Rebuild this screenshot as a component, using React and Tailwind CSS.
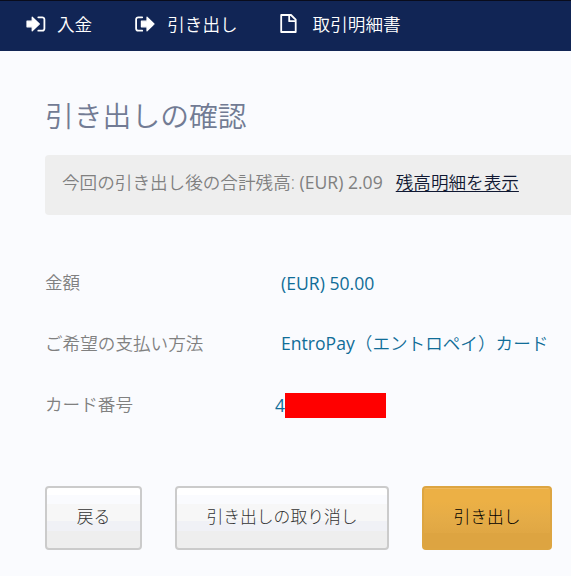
import React from 'react';

const DepositIcon = () => (
  <svg viewBox="0 0 20 16" className="w-5 h-4 shrink-0" fill="none">
    <path d="M1 5.2h5.2V1.2L13.3 8l-7.1 6.8v-4H1z" fill="#fff" stroke="#fff" strokeWidth="1.2" strokeLinejoin="round" />
    <path d="M12.3 1.3h3.9a2.2 2.2 0 0 1 2.2 2.2v9a2.2 2.2 0 0 1-2.2 2.2h-3.9" stroke="#fff" strokeWidth="1.8" strokeLinecap="round" />
  </svg>
);

const WithdrawIcon = () => (
  <svg viewBox="0 0 20 16" className="w-5 h-4 shrink-0" fill="none">
    <path d="M7.2 1.3H3.3a2.2 2.2 0 0 0-2.2 2.2v9a2.2 2.2 0 0 0 2.2 2.2h3.9" stroke="#fff" strokeWidth="1.8" strokeLinecap="round" />
    <path d="M6.4 5.2h5.6V1.2L19 8l-7 6.8v-4H6.4z" fill="#fff" stroke="#fff" strokeWidth="1.2" strokeLinejoin="round" />
  </svg>
);

const FileIcon = () => (
  <svg viewBox="0 0 17 19" className="mb-0.5 w-[17px] h-[19px] shrink-0" fill="none" stroke="#fff" strokeWidth="1.8" strokeLinejoin="round">
    <path d="M1.2 1h9.8l4.7 4.7V18H1.2z" />
    <path d="M9.2 1v6.2h6.5" />
  </svg>
);

const Row = ({ label, children }) => (
  <div className="flex h-[61px] items-center">
    <div className="w-[236px] shrink-0 pb-1 text-[#808080]">{label}</div>
    <div className="flex items-center text-[#106d98] font-normal">{children}</div>
  </div>
);

const App = () => (
  <div className="w-[571px] h-[576px] overflow-hidden bg-[#fafbfe] text-[17.6px] leading-6 font-[350] whitespace-nowrap font-['Open_Sans','Noto_Sans_CJK_JP',sans-serif]">
    <nav className="flex h-[51px] items-center border-t border-[#090c1c] bg-[#112555] pb-1 text-white font-[350]">
      <a className="ml-[26px] flex items-center gap-[11px]">
        <DepositIcon />
        <span className="pb-px">入金</span>
      </a>
      <a className="ml-[43px] flex items-center gap-3">
        <WithdrawIcon />
        <span className="pb-px">引き出し</span>
      </a>
      <a className="ml-[42px] flex items-center gap-4">
        <FileIcon />
        <span className="pb-px">取引明細書</span>
      </a>
    </nav>

    <main className="pl-[45px]">
      <h1 className="pt-[45px] h-[104px] text-[28.8px] leading-10 font-[350] text-[#727b94]">引き出しの確認</h1>

      <div className="flex h-[60px] items-center rounded-l bg-[#eeeeee] pl-[17px] pb-1.5 text-[#808080]">
        <span>今回の引き出し後の合計残高: <span className="font-normal">(EUR) 2.09</span></span>
        <a className="ml-[13px] text-[#101832] underline underline-offset-2 decoration-1">残高明細を表示</a>
      </div>

      <div className="pt-[38px]">
        <Row label="金額">
          <span className="pb-0.5">(EUR) 50.00</span>
        </Row>
        <Row label="ご希望の支払い方法">
          <span className="pb-1">EntroPay<span className="font-[350]">（エントロペイ）カード</span></span>
        </Row>
        <Row label="カード番号">
          <span className="-ml-[6px] w-2.5 pb-0.5">4</span>
          <span className="h-[25px] w-[101px] bg-[#ff0000]" />
        </Row>
      </div>

      <div className="mt-[50px] flex text-[16.8px] font-light text-[#333333]">
        <button className="h-16 w-[97px] rounded border-2 border-[#cbcbcb] bg-[linear-gradient(#fff_0_12%,#fafbfe_12%_27%,#f7f7f7_27%_55%,#f0f1f6_55%_71%,#eeeeee_71%)] pb-0.5">戻る</button>
        <button className="ml-[33px] h-16 w-[214px] rounded border-2 border-[#cbcbcb] bg-[linear-gradient(#fff_0_12%,#fafbfe_12%_27%,#f7f7f7_27%_55%,#f0f1f6_55%_71%,#eeeeee_71%)] pb-0.5">引き出しの取り消し</button>
        <button className="ml-[33px] h-16 w-[130px] rounded border-2 border-[#dda541] bg-[linear-gradient(#efb95f_0_2%,#ecb045_2%_22%,#e5ac47_50%,#e0a744_75%,#dda441_75%)] pb-0.5 text-black">引き出し</button>
      </div>
    </main>
  </div>
);

export default App;
